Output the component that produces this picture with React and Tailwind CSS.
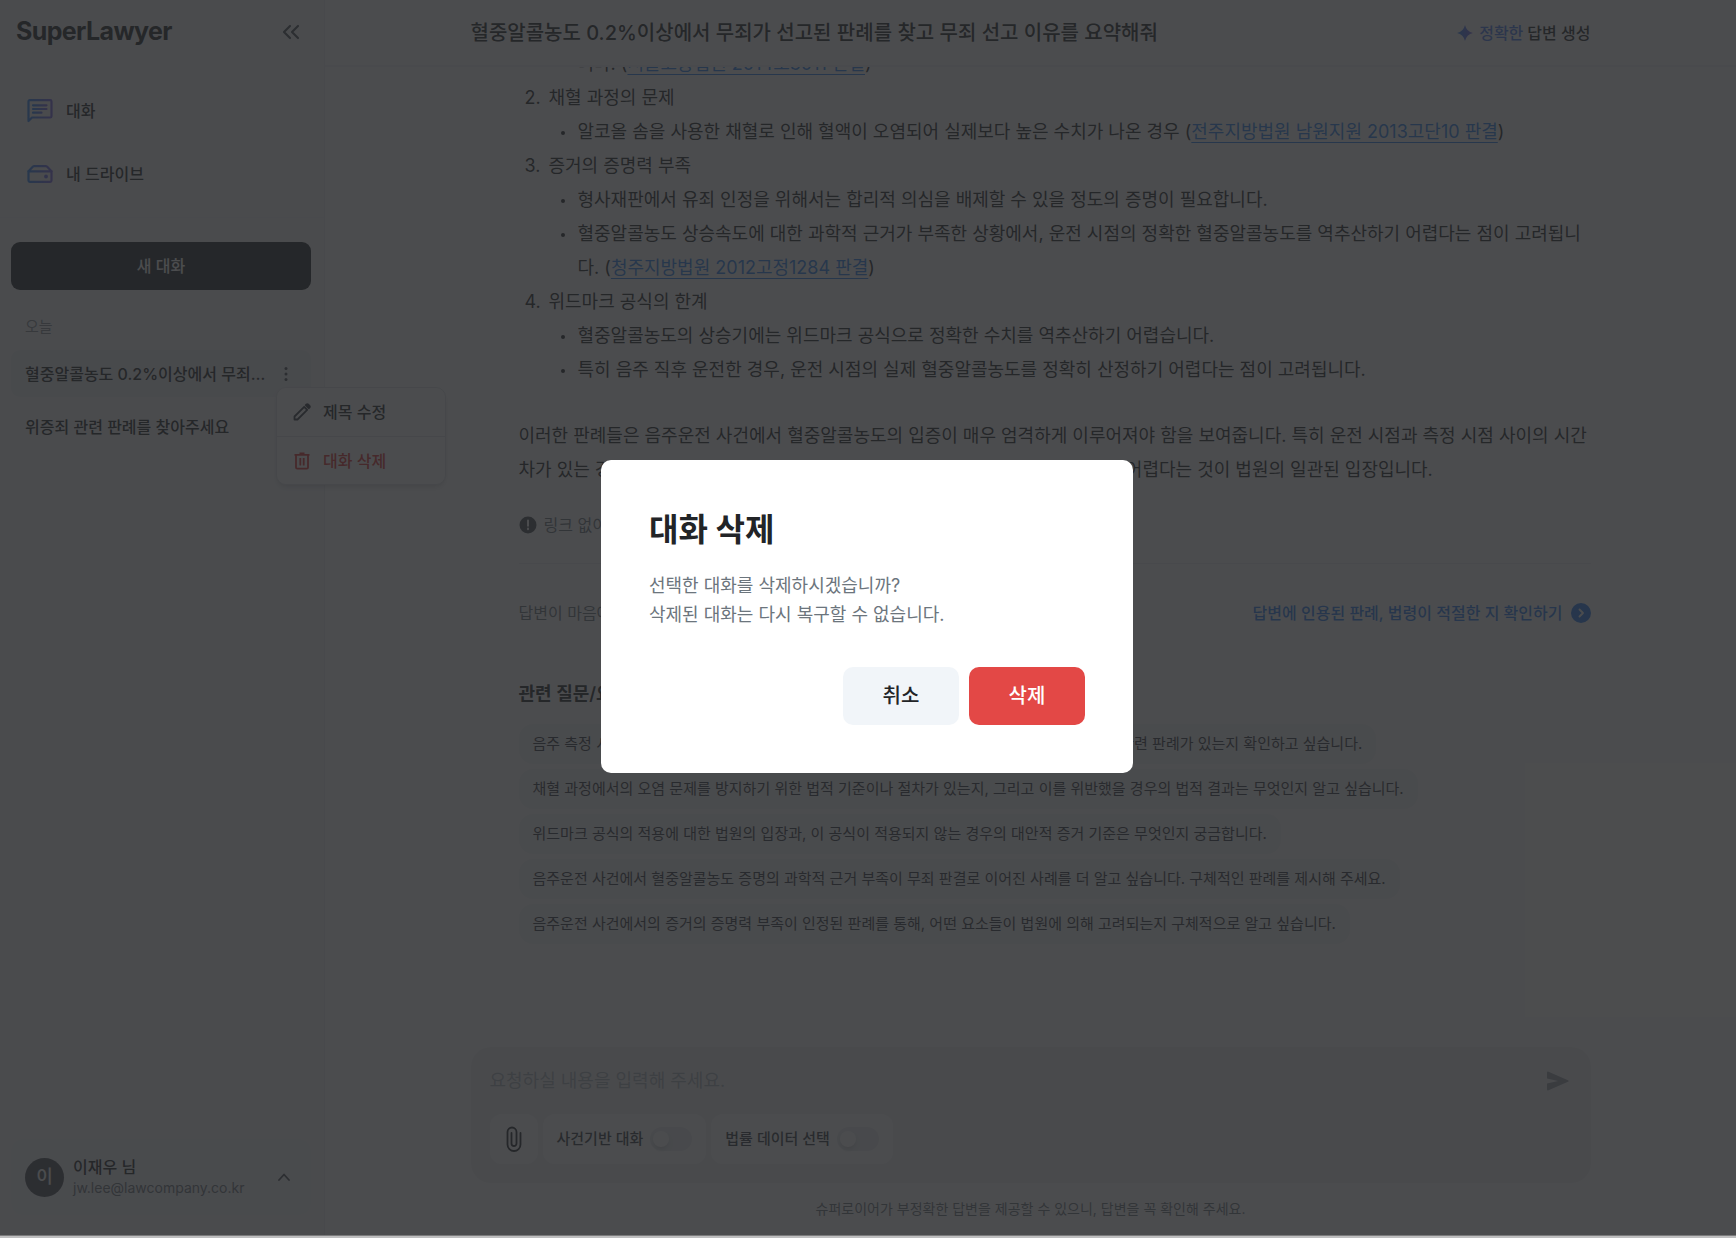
import React, { useState } from 'react';

const history = ['혈중알콜농도 0.2%이상에서 무죄가 선고된 판례를 찾고', '위증죄 관련 판례를 찾아주세요'];

const related = [
  '음주 측정 시점과 운전 시점의 차이로 인해 혈중알콜농도 증명이 어려운 경우, 이와 관련된 다른 관련 판례가 있는지 확인하고 싶습니다.',
  '채혈 과정에서의 오염 문제를 방지하기 위한 법적 기준이나 절차가 있는지, 그리고 이를 위반했을 경우의 법적 결과는 무엇인지 알고 싶습니다.',
  '위드마크 공식의 적용에 대한 법원의 입장과, 이 공식이 적용되지 않는 경우의 대안적 증거 기준은 무엇인지 궁금합니다.',
  '음주운전 사건에서 혈중알콜농도 증명의 과학적 근거 부족이 무죄 판결로 이어진 사례를 더 알고 싶습니다. 구체적인 판례를 제시해 주세요.',
  '음주운전 사건에서의 증거의 증명력 부족이 인정된 판례를 통해, 어떤 요소들이 법원에 의해 고려되는지 구체적으로 알고 싶습니다.',
];

function Gradient({ id }) {
  return (
    <defs>
      <linearGradient id={id} x1="0" y1="0" x2="1" y2="0">
        <stop offset="0" stopColor="#2f86f6" />
        <stop offset="1" stopColor="#7a68e8" />
      </linearGradient>
    </defs>
  );
}

function ChatIcon() {
  return (
    <svg width="26" height="24" viewBox="0 0 26 24" fill="none" stroke="url(#chatGrad)" strokeWidth="2.200" strokeLinecap="round" strokeLinejoin="round">
      <Gradient id="chatGrad" />
      <path d="M1.500 22V2.500A1.300 1.300 0 0 1 2.800 1.200H23.200A1.300 1.300 0 0 1 24.500 2.500V17.200A1.300 1.300 0 0 1 23.200 18.500H5Z" />
      <path d="M6 6.300H19.500M6 10H19.510M6 13.700H14.500" />
    </svg>
  );
}

function DriveIcon() {
  return (
    <svg width="26" height="18" viewBox="0 0 26 18" fill="none" stroke="url(#driveGrad)" strokeWidth="2.200" strokeLinecap="round" strokeLinejoin="round">
      <Gradient id="driveGrad" />
      <path d="M1.500 6.300V15.500A1.300 1.300 0 0 0 2.800 16.800H23.200A1.300 1.300 0 0 0 24.500 15.500V6.300" />
      <path d="M1.500 6.300L6 1.600Q6.500 1.200 7.300 1.200H18.700Q19.500 1.200 20 1.600L24.500 6.300Z" />
      <circle cx="19" cy="11.500" r="1.900" fill="#6a70ee" stroke="none" />
    </svg>
  );
}

function Bullet({ children }) {
  return (
    <li className="flex gap-[13px]">
      <span className="mt-4 h-1 w-1 shrink-0 rounded-full bg-[#222427]"></span>
      <span>{children}</span>
    </li>
  );
}

function Section({ number, title, children }) {
  return (
    <li className="flex">
      <span className="w-6 shrink-0">{number}</span>
      <div className="min-w-0 flex-1">
        <p>{title}</p>
        <ul className="pl-3">{children}</ul>
      </div>
    </li>
  );
}

function CaseLink({ children }) {
  return (
    <a href="#" className="text-[#2b85f0] underline underline-offset-4">
      {children}
    </a>
  );
}

function Toggle({ label }) {
  return (
    <label className="flex h-[50px] items-center gap-[7px] rounded-xl bg-white px-[14px] text-[15px] font-medium text-[#343a40]">
      {label}
      <input type="checkbox" className="peer sr-only" />
      <span className="flex h-6 w-[42px] items-center rounded-full bg-[#e9ecef] px-[3px] peer-checked:justify-end peer-checked:bg-blue-500">
        <span className="h-4 w-4 rounded-full bg-white shadow-md"></span>
      </span>
    </label>
  );
}

function Sidebar() {
  return (
    <aside className="flex w-[325px] shrink-0 flex-col border-r border-[#e9ecef] bg-[#f8f9fa]">
      <div className="flex h-16 items-center justify-between pl-4 pr-6">
        <span className="text-[25px] font-bold tracking-tight">SuperLawyer</span>
        <button aria-label="사이드바 접기">
          <svg width="18" height="16" viewBox="0 0 18 16" fill="none" stroke="#495057" strokeWidth="2.200" strokeLinecap="round" strokeLinejoin="round">
            <path d="M8 2L2 8L8 14M16 2L10 8L16 14" />
          </svg>
        </button>
      </div>

      {/* Main menu */}
      <nav className="flex flex-col border-b border-[#f1f3f5] pb-3 pt-[15px] text-base font-medium">
        <a href="#" className="flex h-[63px] items-center gap-[13px] pl-[27px]">
          <ChatIcon />
          대화
        </a>
        <a href="#" className="flex h-[63px] items-center gap-[13px] pl-[27px]">
          <DriveIcon />내 드라이브
        </a>
      </nav>

      <div className="flex flex-1 flex-col px-[11px] pb-5 pt-6">
        <button className="h-12 w-[300px] rounded-[9px] bg-[#212529] text-base font-medium text-white">새 대화</button>
        <p className="mt-[27px] pl-[14px] text-[15px] leading-5 text-[#868e96]">오늘</p>
        <ul className="mt-[13px] flex w-[300px] flex-col gap-1.5 text-base font-medium">
          <li className="relative flex h-[47px] items-center rounded-[9px] bg-[#edeff2] pl-[14px] pr-5">
            <a href="#" className="w-[248px] truncate">{history[0]}</a>
            <button aria-label="더보기" className="ml-auto">
              <svg width="10" height="16" viewBox="0 0 10 16" fill="#495057">
                <circle cx="5" cy="2.500" r="1.500" />
                <circle cx="5" cy="8" r="1.500" />
                <circle cx="5" cy="13.500" r="1.500" />
              </svg>
            </button>

            {/* Context menu */}
            <div className="absolute left-[265px] top-[37px] z-10 w-[170px] rounded-[10px] border border-[#dee2e6] bg-white shadow-md">
              <button className="flex h-[49px] w-full items-center gap-3 border-b border-[#dee2e6] pl-4">
                <svg width="18" height="18" viewBox="0 0 18 18" fill="none" stroke="#343a40" strokeWidth="1.800" strokeLinejoin="round">
                  <path d="M1.500 13.500L11.200 3.800L14.200 6.800L4.500 16.500H1.500Z" />
                  <path d="M12.800 2.200L13.500 1.500Q14.300 .8 15.100 1.500L16.500 2.900Q17.200 3.700 16.500 4.500L15.800 5.200Z" fill="#343a40" />
                </svg>
                제목 수정
              </button>
              <button className="flex h-[47px] w-full items-center gap-3 pl-4 text-[#e03131]">
                <svg width="18" height="18" viewBox="0 0 18 18" fill="none" stroke="currentColor" strokeWidth="1.800" strokeLinejoin="round">
                  <path d="M3 3V15.500Q3 16.700 4.200 16.700H13.800Q15 16.700 15 15.500V3M1.500 2.800H16.500M6.500 1.500H11.500M7.300 6V13.500M10.700 6V13.500" />
                </svg>
                대화 삭제
              </button>
            </div>
          </li>
          <li className="flex h-[47px] items-center pl-[14px]">
            <a href="#">{history[1]}</a>
          </li>
        </ul>

        {/* User */}
        <button className="mt-auto flex h-[76px] w-[300px] items-center rounded-xl bg-[#f4f5f7] pl-[14px] pr-[21px] text-left">
          <span className="flex h-[39px] w-[39px] items-center justify-center rounded-full bg-[#495057] text-lg font-medium text-white">이</span>
          <span className="ml-[9px]">
            <span className="block text-base font-medium leading-[22px]">이재우 님</span>
            <span className="block text-sm leading-5 text-[#6c757d]">jw.lee@lawcompany.co.kr</span>
          </span>
          <svg className="ml-auto" width="12" height="8" viewBox="0 0 12 8" fill="none" stroke="#495057" strokeWidth="1.800" strokeLinecap="round" strokeLinejoin="round">
            <path d="M1 7L6 1.500L11 7" />
          </svg>
        </button>
      </div>
    </aside>
  );
}

function App() {
  const [isOpen, setIsOpen] = useState(true);
  const [message, setMessage] = useState('');

  return (
    <div className="flex h-screen flex-col bg-white font-['Inter','Noto_Sans_CJK_KR',sans-serif] text-[#222427]">
      <div className="relative flex min-h-0 flex-1">
        <Sidebar />

        <main className="flex min-w-0 flex-1 flex-col">
          {/* Header */}
          <header className="h-[67px] shrink-0 border-b-2 border-[#f1f3f5]">
            <div className="mx-auto flex h-full max-w-[1120px] items-center justify-between">
              <h1 className="text-xl font-medium">혈중알콜농도 0.2%이상에서 무죄가 선고된 판례를 찾고 무죄 선고 이유를 요약해줘</h1>
              <p className="flex items-center text-base font-medium">
                <svg className="mr-1.5" width="16" height="16" viewBox="0 0 16 16" fill="url(#starGrad)">
                  <Gradient id="starGrad" />
                  <path d="M8 0Q9.500 6.500 16 8Q9.500 9.500 8 16Q6.500 9.500 0 8Q6.500 6.500 8 0Z" />
                </svg>
                <span className="mr-1 text-[#4a7df2]">정확한</span>
                답변 생성
              </p>
            </div>
          </header>

          {/* Answer, scrolled to the end */}
          <div className="flex min-h-0 flex-1 flex-col justify-end overflow-hidden pb-[103px]">
            <article className="mx-auto w-full max-w-[1120px] pl-12">
              <div className="text-lg leading-[34px]">
                <p className="pl-[59px]">
                  니다. (<CaseLink>서울고등법원 2014노3011 판결</CaseLink>)
                </p>
                <ol className="pl-1.5">
                  <Section number="2." title="채혈 과정의 문제">
                    <Bullet>
                      알코올 솜을 사용한 채혈로 인해 혈액이 오염되어 실제보다 높은 수치가 나온 경우 (
                      <CaseLink>전주지방법원 남원지원 2013고단10 판결</CaseLink>)
                    </Bullet>
                  </Section>
                  <Section number="3." title="증거의 증명력 부족">
                    <Bullet>형사재판에서 유죄 인정을 위해서는 합리적 의심을 배제할 수 있을 정도의 증명이 필요합니다.</Bullet>
                    <Bullet>
                      혈중알콜농도 상승속도에 대한 과학적 근거가 부족한 상황에서, 운전 시점의 정확한 혈중알콜농도를 역추산하기 어렵다는 점이 고려됩니다. (
                      <CaseLink>청주지방법원 2012고정1284 판결</CaseLink>)
                    </Bullet>
                  </Section>
                  <Section number="4." title="위드마크 공식의 한계">
                    <Bullet>혈중알콜농도의 상승기에는 위드마크 공식으로 정확한 수치를 역추산하기 어렵습니다.</Bullet>
                    <Bullet>특히 음주 직후 운전한 경우, 운전 시점의 실제 혈중알콜농도를 정확히 산정하기 어렵다는 점이 고려됩니다.</Bullet>
                  </Section>
                </ol>
                <p className="mt-8">
                  이러한 판례들은 음주운전 사건에서 혈중알콜농도의 입증이 매우 엄격하게 이루어져야 함을 보여줍니다. 특히 운전 시점과 측정 시점 사이의 시간차가 있는 경우, 위드마크 공식만으로는 유죄를 인정할 만한 엄격한 수준의 증명이 어렵다는 것이 법원의 일관된 입장입니다.
                </p>
              </div>

              <p className="mt-[26px] flex items-center gap-[7px] text-base leading-6 text-[#6c757d]">
                <svg width="18" height="18" viewBox="0 0 18 18">
                  <circle cx="9" cy="9" r="8.500" fill="#495057" />
                  <path d="M9 4.500V9.800M9 12.600V13.200" stroke="#fff" strokeWidth="2" strokeLinecap="round" />
                </svg>
                링크 없이 인용된 판례는 확인이 필요합니다.
              </p>

              <div className="mt-[26px] flex items-center justify-between border-t border-[#e9ecef] pt-[37px] text-base leading-6">
                <p className="text-[#6c757d]">답변이 마음에 드시나요?</p>
                <a href="#" className="flex items-center gap-2 font-medium text-[#2b7ff0]">
                  답변에 인용된 판례, 법령이 적절한 지 확인하기
                  <svg width="20" height="20" viewBox="0 0 20 20" fill="none">
                    <circle cx="10" cy="10" r="10" fill="#2b7ff0" />
                    <path d="M8.500 6.500L12 10L8.500 13.500" stroke="#fff" strokeWidth="1.800" strokeLinecap="round" strokeLinejoin="round" />
                  </svg>
                </a>
              </div>

              <h2 className="mt-[55px] text-lg font-semibold leading-7">관련 질문/요청</h2>
              <div className="mt-4 flex flex-col items-start gap-[5px]">
                {related.map((item) => (
                  <button key={item} className="h-10 rounded-[14px] bg-[#f4f5f6] px-[14px] text-[15px] text-[#343a40]">
                    {item}
                  </button>
                ))}
              </div>
            </article>
          </div>

          {/* Message box */}
          <div className="mx-auto w-full max-w-[1120px] shrink-0">
            <form className="rounded-[20px] bg-[#f2f3f4] px-[19px] pb-[19px] pt-[17px]" onSubmit={(e) => e.preventDefault()}>
              <div className="flex h-[34px] items-center justify-between pr-[3px]">
                <input
                  type="text"
                  aria-label="메시지"
                  value={message}
                  onChange={(e) => setMessage(e.target.value)}
                  placeholder="요청하실 내용을 입력해 주세요."
                  className="flex-1 bg-transparent text-lg placeholder:text-[#adb5bd] focus:outline-none"
                />
                <button aria-label="보내기">
                  <svg width="22" height="20" viewBox="0 0 22 20" fill="#9aa1a8">
                    <path d="M0 1.500Q.2 .2 1.500 .8L21 9.200Q22.400 10 21 10.800L1.500 19.200Q.2 19.800 0 18.500V12.500L11 10L0 7.500Z" />
                  </svg>
                </button>
              </div>
              <div className="mt-4 flex gap-[5px]">
                <button aria-label="파일 첨부" className="flex h-[50px] w-12 items-center justify-center rounded-xl bg-white">
                  <svg width="16" height="26" viewBox="0 0 16 26" fill="none" stroke="#212529" strokeWidth="1.800" strokeLinecap="round">
                    <path d="M14.500 7V18.500A6.500 6.500 0 0 1 1.500 18.500V6A4.500 4.500 0 0 1 10.500 6V17.500A2.500 2.500 0 0 1 5.500 17.500V7" />
                  </svg>
                </button>
                <Toggle label="사건기반 대화" />
                <Toggle label="법률 데이터 선택" />
              </div>
            </form>
            <p className="pb-4 pt-4 text-center text-sm leading-5 text-[#6c757d]">
              슈퍼로이어가 부정확한 답변을 제공할 수 있으니, 답변을 꼭 확인해 주세요.
            </p>
          </div>
        </main>

        {/* Delete dialog */}
        {isOpen && (
          <div className="absolute inset-0 z-20 flex items-center justify-center bg-[#27282a]/83 pb-0.5 pr-0.5">
            <div role="dialog" aria-modal="true" aria-labelledby="dialog-title" className="w-[532px] rounded-[10px] bg-white p-12">
              <h2 id="dialog-title" className="text-[32px] font-bold leading-[44px]">대화 삭제</h2>
              <p className="mt-[19px] text-lg leading-[29px] text-[#6c757d]">
                선택한 대화를 삭제하시겠습니까?
                <br />
                삭제된 대화는 다시 복구할 수 없습니다.
              </p>
              <div className="mt-[38px] flex justify-end gap-2.5">
                <button onClick={() => setIsOpen(false)} className="h-[58px] w-[116px] rounded-[10px] bg-[#f1f5f9] text-xl font-medium">
                  취소
                </button>
                <button onClick={() => setIsOpen(false)} className="h-[58px] w-[116px] rounded-[10px] bg-[#e34846] text-xl font-medium text-white">
                  삭제
                </button>
              </div>
            </div>
          </div>
        )}
      </div>
      <div className="h-[3px] shrink-0 border-t border-[#7b7b7c] bg-[#bebebf]"></div>
    </div>
  );
}

export default App;
